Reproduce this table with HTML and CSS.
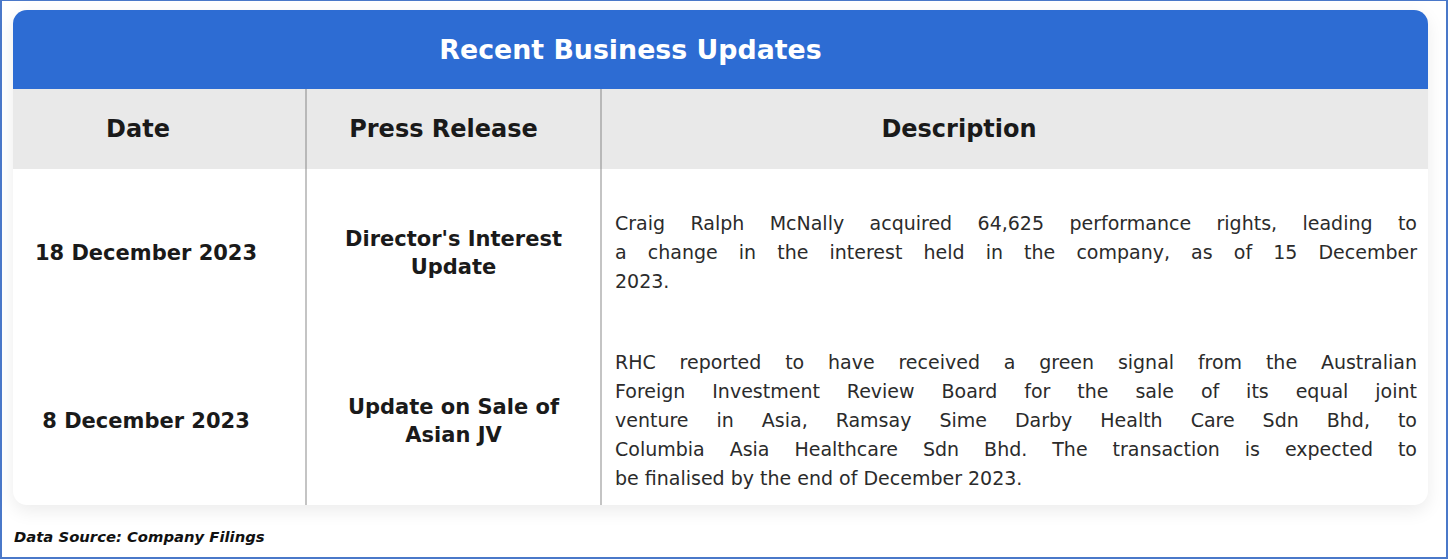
FILE: index.html
```html
<!DOCTYPE html>
<html lang="en">
<head>
<meta charset="utf-8">
<title>Recent Business Updates</title>
<link rel="stylesheet" href="styles.css">
</head>
<body>
<div class="frame">
  <div class="card">
    <div class="title">Recent Business Updates</div>
    <div class="grid">
      <div class="th c1">Date</div>
      <div class="th c2">Press Release</div>
      <div class="th c3">Description</div>

      <div class="td c1 date">18 December 2023</div>
      <div class="td c2 release">Director's Interest<br>Update</div>
      <div class="td c3 desc">
        <span class="ln">Craig Ralph McNally acquired 64,625 performance rights, leading to</span>
        <span class="ln">a change in the interest held in the company, as of 15 December</span>
        <span class="ln last">2023.</span>
      </div>

      <div class="td c1 date">8 December 2023</div>
      <div class="td c2 release">Update on Sale of<br>Asian JV</div>
      <div class="td c3 desc">
        <span class="ln">RHC reported to have received a green signal from the Australian</span>
        <span class="ln">Foreign Investment Review Board for the sale of its equal joint</span>
        <span class="ln">venture in Asia, Ramsay Sime Darby Health Care Sdn Bhd, to</span>
        <span class="ln">Columbia Asia Healthcare Sdn Bhd. The transaction is expected to</span>
        <span class="ln last">be finalised by the end of December 2023.</span>
      </div>
    </div>
  </div>
  <div class="source">Data Source: Company Filings</div>
</div>
</body>
</html>
```

FILE: styles.css
```css
html, body {
  margin: 0;
  padding: 0;
  background: #ffffff;
}

.frame {
  box-sizing: border-box;
  width: 1448px;
  height: 559px;
  border: 2px solid #4a78c9;
  border-top-width: 1px;
  padding: 9px 18px 0 11px;
  font-family: "DejaVu Sans", "Noto Sans", sans-serif;
  color: #222222;
}

.card {
  width: 1415px;
  border-radius: 14px;
  background: #ffffff;
  box-shadow: 0 6px 18px rgba(0, 0, 0, 0.08);
  overflow: hidden;
}

.title {
  height: 79px;
  box-sizing: border-box;
  padding-right: 180px;
  background: #2d6cd3;
  color: #ffffff;
  font-weight: 700;
  font-size: 26.8px;
  display: flex;
  align-items: center;
  justify-content: center;
}

.grid {
  display: grid;
  grid-template-columns: 292px 295px 828px;
}

.th {
  height: 80px;
  background: #e9e9e9;
  font-weight: 700;
  font-size: 24px;
  display: flex;
  align-items: center;
  justify-content: center;
  color: #1a1a1a;
}

.th.c1 { padding-right: 42px; }
.th.c2 { padding-right: 20px; }
.th.c3 { padding-right: 112px; }

.c2, .c3 {
  border-left: 2px solid #c4c4c4;
}

.th.c2, .th.c3 {
  border-left-color: #b8b8b8;
}

.td {
  height: 168px;
  box-sizing: border-box;
  display: flex;
  flex-direction: column;
  justify-content: center;
}

.date {
  align-items: center;
  padding-right: 26px;
  font-weight: 700;
  font-size: 21px;
  color: #1a1a1a;
}

.release {
  text-align: center;
  font-weight: 700;
  font-size: 21px;
  line-height: 28px;
  color: #1a1a1a;
}

.desc {
  padding: 0 11px 2px 13px;
  font-size: 19px;
  line-height: 29px;
  color: #2b2b2b;
}

.ln {
  display: block;
  text-align: justify;
  text-align-last: justify;
  white-space: nowrap;
}

.ln.last {
  text-align-last: left;
}

.source {
  margin-top: 23px;
  font-weight: 700;
  font-style: italic;
  font-size: 14.8px;
  color: #111111;
  margin-left: 1px;
}
```
